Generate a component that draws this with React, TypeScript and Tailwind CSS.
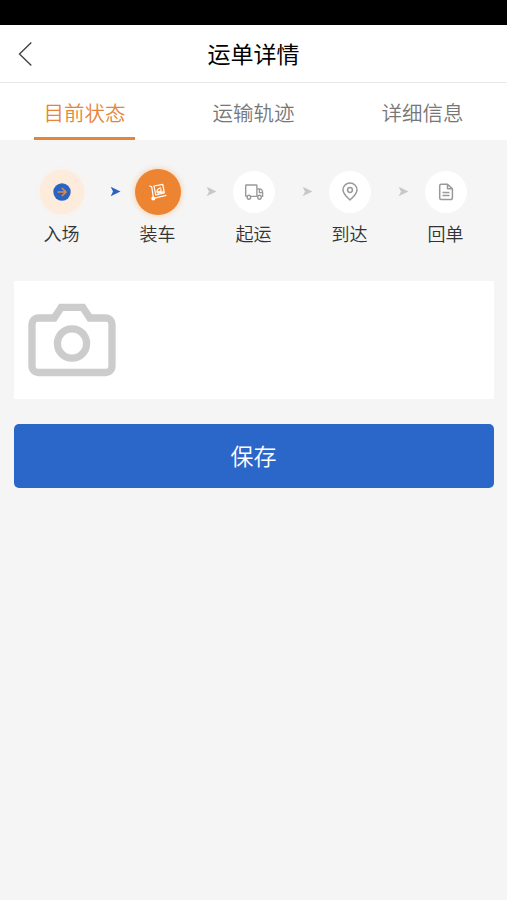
import { useState } from 'react';
import type { ReactNode } from 'react';
import clsx from 'clsx';

interface Step {
  label: string;
  icon: ReactNode;
  circle: string;
  arrow?: string;
}

const tabs = ['目前状态', '运输轨迹', '详细信息'];

function EnterIcon() {
  return (
    <svg width="18" height="18" viewBox="0 0 18 18" fill="none">
      <circle cx="9" cy="9" r="8.7" fill="#2b63c4" />
      <path d="M4.500 9h8.300M8.900 5 12.900 9l-4 4" stroke="#d98a45" strokeWidth="1.700" />
    </svg>
  );
}

function LoadIcon() {
  return (
    <svg width="20" height="20" viewBox="0 0 20 20" fill="none" stroke="#fff" strokeWidth="1.200" strokeLinecap="round" strokeLinejoin="round">
      <path d="M1.800 4 3.700 4.700l1.800 11.700 12.500-3" />
      <path d="m6 4 8.800-1.600 1.500 8.400-8.500 2.200z" />
      <path d="M12.700 5.800c-2.400.5-3.800 2.100-3.700 4.400l4-1V7.400M10 11.200l5.500-1.300" />
      <circle cx="5.300" cy="16.500" r="1.400" fill="#fff" />
    </svg>
  );
}

function TruckIcon() {
  return (
    <svg width="20" height="20" viewBox="0 0 20 20" fill="none" stroke="#999" strokeWidth="1.400" strokeLinejoin="round">
      <path d="M3 14.400H2.300a.6.6 0 0 1-.6-.6V3.600a.6.6 0 0 1 .6-.6h10a.6.6 0 0 1 .6.6v10.800H6.800" />
      <path d="M12.900 6.900h2.200a3.600 3.600 0 0 1 3.500 3.600v3.900h-1.200M13.600 14.400h-.7M15.400 7.300v3.300h3" />
      <ellipse cx="4.900" cy="15.200" rx="1.700" ry="2" />
      <ellipse cx="15.500" cy="15.200" rx="1.700" ry="2" />
    </svg>
  );
}

function PinIcon() {
  return (
    <svg width="18" height="20" viewBox="0 0 18 20" fill="none" stroke="#999" strokeWidth="1.500">
      <path d="M9 18C6 15.300 2 11.800 2 8a7 7 0 0 1 14 0c0 3.800-4 7.300-7 10z" strokeLinejoin="round" />
      <circle cx="9" cy="8" r="2.400" />
    </svg>
  );
}

function ReceiptIcon() {
  return (
    <svg width="16" height="20" viewBox="0 0 16 20" fill="none" stroke="#999" strokeWidth="1.500" strokeLinejoin="round">
      <path d="M3.200 2.200h6.300l4.900 4.700v9.200a1.500 1.500 0 0 1-1.500 1.500H3.200a1.500 1.500 0 0 1-1.500-1.500V3.700a1.500 1.500 0 0 1 1.500-1.500z" />
      <path d="M9.500 2.400v4.400h4.600M4.500 10.400h7M4.500 13.600h7" />
    </svg>
  );
}

function CameraIcon() {
  return (
    <svg width="88" height="74" viewBox="0 0 88 74" fill="none" stroke="#ccc" strokeWidth="7.300">
      <path d="M10 15h16.200l7-10.700h21.600l7 10.700H78a6 6 0 0 1 6 6v42.500a6 6 0 0 1-6 6H10a6 6 0 0 1-6-6V21a6 6 0 0 1 6-6z" />
      <circle cx="44" cy="40.500" r="14.600" />
    </svg>
  );
}

const steps: Step[] = [
  {
    label: '入场',
    icon: <EnterIcon />,
    circle: 'size-11 bg-[#fdebdc] shadow-[0_0_5px_#fbeee2]',
    arrow: 'text-[#2b63c4]',
  },
  {
    label: '装车',
    icon: <LoadIcon />,
    circle: 'size-[46px] bg-[#ed8431] shadow-[0_0_6px_#f8c79c]',
    arrow: 'text-[#c8c8c8]',
  },
  { label: '起运', icon: <TruckIcon />, circle: 'size-[42px] bg-white', arrow: 'text-[#c8c8c8]' },
  { label: '到达', icon: <PinIcon />, circle: 'size-[42px] bg-white', arrow: 'text-[#c8c8c8]' },
  { label: '回单', icon: <ReceiptIcon />, circle: 'size-[42px] bg-white' },
];

export default function App() {
  const [active, setActive] = useState(0);

  return (
    <div className="min-h-screen bg-[#f5f5f5] font-['Noto_Sans_CJK_SC',sans-serif]">
      <div className="h-[25px] bg-black" />

      <header className="grid h-[58px] grid-cols-[1fr_auto_1fr] items-center border-b border-[#e8e8e8] bg-white">
        <button className="ml-[18px] w-4" aria-label="返回">
          <svg width="15" height="26" viewBox="0 0 15 26" fill="none" stroke="#444" strokeWidth="1.400">
            <path d="M13.300 1.500 1.500 13l11.800 11.500" />
          </svg>
        </button>
        <h1 className="pb-0.5 text-[23px] leading-8 font-normal text-black">运单详情</h1>
      </header>

      <nav className="grid h-[57px] grid-cols-3 bg-white">
        {tabs.map((tab, i) => (
          <button
            key={tab}
            onClick={() => setActive(i)}
            className={clsx(
              'mx-auto w-[101px] border-b-3 pt-1 text-[20.5px] font-[350] whitespace-nowrap',
              i === active ? 'border-[#e6853a] text-[#e6853a]' : 'border-transparent text-[#777]'
            )}
          >
            {tab}
          </button>
        ))}
      </nav>

      <main className="px-[13.5px]">
        <ol className="grid h-[141px] grid-cols-5 pt-7">
          {steps.map(step => (
            <li key={step.label} className="relative flex flex-col items-center">
              <div className="flex h-[47px] items-center">
                <div className={clsx('flex items-center justify-center rounded-full', step.circle)}>
                  {step.icon}
                </div>
              </div>
              <span className="mt-[5px] text-[18px] leading-[26px] font-[350] text-[#333]">{step.label}</span>
              {step.arrow && (
                <svg
                  className={clsx('absolute top-[18px] -right-[11px]', step.arrow)}
                  width="11"
                  height="11"
                  viewBox="0 0 11 11"
                  fill="currentColor"
                >
                  <path d="M.7.800 10.500 5.500.700 10.200 3 5.500z" />
                </svg>
              )}
            </li>
          ))}
        </ol>

        <section className="h-[118px] bg-white pt-[22px] pl-[14.5px]">
          <button aria-label="拍照">
            <CameraIcon />
          </button>
        </section>

        <button className="mt-[25px] h-[64px] w-full rounded-[5px] bg-[#2b66c9] pb-0.5 text-[23px] font-[350] text-white">
          保存
        </button>
      </main>
    </div>
  );
}
